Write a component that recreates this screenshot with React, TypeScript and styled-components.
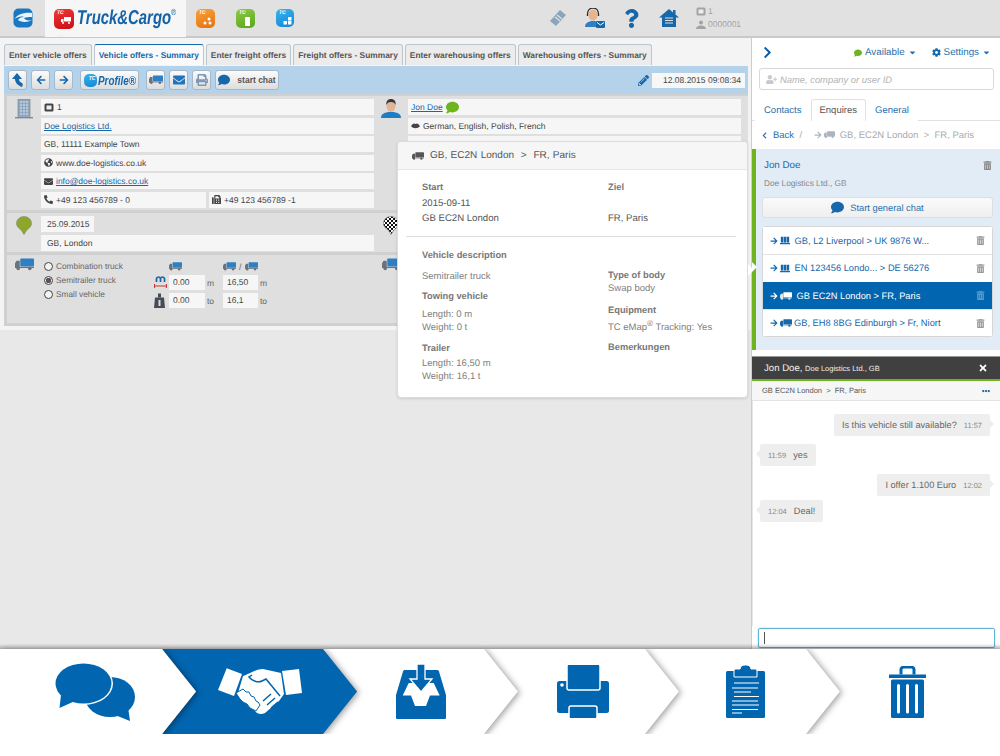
import styled, { createGlobalStyle } from 'styled-components';
import {
  FaArrowLeft,
  FaArrowRight,
  FaCaretDown,
  FaChevronLeft,
  FaChevronRight,
  FaCog,
  FaComment,
  FaEllipsisH,
  FaEnvelope,
  FaFax,
  FaGlobeAmericas,
  FaPencilAlt,
  FaPhoneAlt,
  FaPrint,
  FaQuestion,
  FaTimes,
  FaTrashAlt,
  FaUserPlus,
} from 'react-icons/fa';

const GlobalStyle = createGlobalStyle`
  html, body {
    margin: 0;
    padding: 0;
    background: #fff;
    font-family: "Liberation Sans", Arial, sans-serif;
    text-rendering: geometricPrecision;
  }
  * { box-sizing: border-box; }
`;

const Page = styled.div`
  width: 1000px;
  height: 756px;
  display: flex;
  flex-direction: column;
  overflow: hidden;
  background: #fff;
`;

/* top bar */
const TopBar = styled.header`
  height: 38px;
  flex: none;
  display: flex;
  align-items: center;
  background: #e1e1e1;
  border-bottom: 2px solid #c9c9c9;
`;

const LogoSlot = styled.div`
  width: 45px;
  height: 36px;
  display: flex;
  align-items: center;
  padding-left: 13px;
`;

const ActiveProduct = styled.div`
  position: relative;
  width: 141px;
  height: 37px;
  margin-bottom: -1px;
  display: flex;
  align-items: center;
  gap: 3px;
  padding-left: 9px;
  background: #f6f6f6;
  &::after {
    content: '';
    position: absolute;
    left: 11px;
    bottom: 0;
    border: 5px solid transparent;
    border-top: 0;
    border-bottom-color: #f3f3f3;
  }
`;

const Brand = styled.span`
  display: inline-block;
  width: 105px;
  font-size: 20px;
  font-weight: 700;
  font-style: italic;
  color: #1463a6;
  white-space: nowrap;
  transform: scaleX(0.745);
  transform-origin: left center;
  sup {
    font-size: 9px;
    font-weight: 400;
    vertical-align: 9px;
    line-height: 0;
  }
`;

const ProductTiles = styled.div`
  display: flex;
  align-items: center;
  gap: 21px;
  margin-left: 10px;
`;

const Tile = styled.div<{ $from: string; $to: string; $size?: number }>`
  width: ${(p) => p.$size ?? 19}px;
  height: ${(p) => p.$size ?? 19}px;
  flex: none;
  border-radius: 5px;
  padding: 1px 0 0 3px;
  background: linear-gradient(160deg, ${(p) => p.$from}, ${(p) => p.$to});
  color: #fff;
  font-size: 5px;
  font-weight: 700;
  font-style: italic;
  line-height: 7px;
  display: flex;
  flex-direction: column;
  svg { margin: 0 0 0 4px; }
`;

const TopIcons = styled.div`
  margin-left: auto;
  display: flex;
  align-items: center;
  height: 36px;
  padding-right: 258px;
`;

const TopIconSlot = styled.div<{ $width: number }>`
  width: ${(p) => p.$width}px;
  display: flex;
  justify-content: center;
  color: #1767ab;
`;

const AccountInfo = styled.div`
  width: 46px;
  margin-left: 9px;
  font-size: 8.5px;
  line-height: 13px;
  color: #a3a3a3;
  div { display: flex; align-items: center; gap: 2px; }
`;

/* main split */
const Workspace = styled.div`
  height: 611px;
  flex: none;
  display: flex;
`;

const LeftPane = styled.main`
  position: relative;
  width: 752px;
  flex: none;
  background: #e8e8e8;
  border-right: 1px solid #cdcdcd;
`;

const OfferPanel = styled.section`
  height: 292px;
  padding: 6px 3px 4px 4px;
  background: #f4f4f4;
`;

const TabRow = styled.nav`
  display: flex;
  gap: 2px;
  height: 22px;
`;

const OfferTab = styled.div<{ $active?: boolean }>`
  padding: 0 4px;
  height: 21px;
  display: flex;
  align-items: center;
  font-size: 8.4px;
  font-weight: 700;
  white-space: nowrap;
  border-radius: 3px 3px 0 0;
  border: 1px solid #bcc6ce;
  border-bottom: 0;
  border-top: ${(p) => (p.$active ? '1px solid #1767ab' : '1px solid #bcc6ce')};
  color: ${(p) => (p.$active ? '#1767ab' : '#555')};
  background: ${(p) => (p.$active ? '#fafafa' : '#ececec')};
`;

const Toolbar = styled.div`
  height: 28px;
  display: flex;
  align-items: center;
  padding-left: 4px;
  gap: 4px;
  background: #b4d2e9;
`;

const ToolButton = styled.button<{ $gapLeft?: number }>`
  height: 20px;
  width: 19px;
  padding: 0;
  margin-left: ${(p) => p.$gapLeft ?? 0}px;
  display: flex;
  align-items: center;
  justify-content: center;
  gap: 6px;
  font-family: inherit;
  font-size: 8.5px;
  font-weight: 700;
  color: #555;
  border: 1px solid #a5b9ca;
  border-radius: 3px;
  background: linear-gradient(#fbfbfb, #dddddd);
  svg { flex: none; }
`;

const ChatToolButton = styled(ToolButton)`
  width: 64px;
  gap: 7px;
`;

const ProfileButton = styled(ToolButton)`
  width: 59px;
  gap: 1px;
  justify-content: flex-start;
  padding-left: 3px;
`;

const ProfileLabel = styled.span`
  display: inline-block;
  width: 39px;
  font-size: 13px;
  font-style: italic;
  font-weight: 700;
  color: #1767ab;
  white-space: nowrap;
  text-align: left;
  transform: scaleX(0.76);
  transform-origin: left center;
`;

const Stamp = styled.div`
  margin-left: auto;
  margin-right: 3px;
  display: flex;
  align-items: center;
  gap: 3px;
  color: #1767ab;
`;

const StampValue = styled.span`
  width: 93px;
  height: 15px;
  padding-right: 4px;
  background: #f7f7f7;
  color: #444;
  font-size: 8.5px;
  line-height: 15px;
  text-align: right;
`;

const Sections = styled.div`
  padding: 2px 0 0 3px;
  background: #d0d0d0;
  height: 232px;
  display: flex;
  flex-direction: column;
  gap: 3px;
`;

const Section = styled.div<{ $height: number }>`
  height: ${(p) => p.$height}px;
  width: 741px;
  display: flex;
  padding-top: 3px;
  background: #dfdfdf;
`;

const Half = styled.div`
  width: 367px;
  display: flex;
  flex: none;
`;

const IconCol = styled.div`
  width: 34px;
  flex: none;
  display: flex;
  justify-content: center;
`;

const RowStack = styled.div`
  flex: 1;
  display: flex;
  flex-direction: column;
  gap: 2.6px;
`;

const Row = styled.div<{ $inset?: boolean; $width?: number }>`
  height: 16px;
  width: ${(p) => (p.$width ? `${p.$width}px` : 'auto')};
  padding-left: ${(p) => (p.$inset ? 6 : 3)}px;
  display: flex;
  align-items: center;
  gap: 3px;
  background: #f6f6f6;
  font-size: 8.5px;
  color: #444;
  white-space: nowrap;
  svg { flex: none; }
`;

const SplitRow = styled.div`
  display: grid;
  grid-template-columns: 1fr 1fr;
  gap: 3px;
`;

const TextLink = styled.span`
  color: #1767ab;
  text-decoration: underline;
`;

const RadioList = styled.div`
  width: 113px;
  flex: none;
  padding: 3px 0 0 3px;
  display: flex;
  flex-direction: column;
  gap: 4px;
`;

const RadioLine = styled.label`
  display: flex;
  align-items: center;
  gap: 3px;
  height: 10px;
  font-size: 8.3px;
  color: #666;
  white-space: nowrap;
`;

const RadioDot = styled.span<{ $on?: boolean }>`
  width: 9px;
  height: 9px;
  flex: none;
  border-radius: 50%;
  border: 1px solid #444;
  background: ${(p) => (p.$on ? 'radial-gradient(circle, #555 0 2.5px, #eee 3px)' : '#f3f3f3')};
`;

const MeasureGrid = styled.div`
  display: grid;
  grid-template-columns: 15px 36px 18px 35px 14px;
  grid-template-rows: 11px 15px 15px;
  row-gap: 3px;
  padding-top: 3px;
  align-items: center;
  font-size: 8.5px;
  color: #666;
`;

const MeasureHead = styled.div`
  display: flex;
  align-items: center;
  gap: 3px;
  height: 11px;
  font-size: 9px;
`;

const MeasureValue = styled.div`
  height: 15px;
  padding-left: 4px;
  background: #f6f6f6;
  color: #444;
  line-height: 15px;
`;

const MeasureUnit = styled.span`
  padding-left: 2px;
`;

/* popover */
const Popover = styled.aside`
  position: absolute;
  left: 397px;
  top: 103px;
  width: 351px;
  height: 257px;
  background: #fff;
  border: 1px solid #dcdcdc;
  border-radius: 4px;
  box-shadow: 0 1px 3px rgba(0, 0, 0, 0.12);
  &::after {
    content: '';
    position: absolute;
    right: -7px;
    top: 122px;
    border: 6px solid transparent;
    border-right: 0;
    border-left: 6px solid #fff;
  }
`;

const PopHeader = styled.div`
  height: 28px;
  padding-left: 14px;
  display: flex;
  align-items: center;
  gap: 6px;
  background: #f6f6f6;
  border-bottom: 1px solid #e6e6e6;
  border-radius: 4px 4px 0 0;
  font-size: 10px;
  color: #555;
  word-spacing: 0.6px;
`;

const PopRoute = styled.div`
  display: grid;
  grid-template-columns: 186px 1fr;
  padding: 10px 0 0 24px;
  font-size: 9.6px;
  line-height: 15.5px;
  color: #666;
`;

const PopDetails = styled.div`
  display: grid;
  grid-template-columns: 186px 1fr;
  padding-left: 24px;
  font-size: 9.5px;
  line-height: 13px;
  color: #666;
`;

const PopTitle = styled.div<{ $top?: number }>`
  font-weight: 700;
  font-size: 9.3px;
  color: #777;
  margin-top: ${(p) => p.$top ?? 0}px;
`;

const PopDivider = styled.hr`
  margin: 9px 11px 12px 8px;
  border: 0;
  border-top: 1px solid #ddd;
`;

const PopLine = styled.div<{ $top?: number }>`
  color: #808080;
  margin-top: ${(p) => p.$top ?? 0}px;
  sup { font-size: 8px; line-height: 0; }
`;

const PopStart = styled.div`
  color: #555;
`;

/* right panel */
const RightPane = styled.aside`
  width: 248px;
  flex: none;
  display: flex;
  flex-direction: column;
  background: #fff;
`;

const PaneHeader = styled.div`
  height: 29px;
  flex: none;
  display: flex;
  align-items: center;
  padding: 0 9px 0 11px;
  font-size: 9.8px;
  color: #2a70ab;
`;

const PaneControl = styled.span<{ $left?: number }>`
  display: flex;
  align-items: center;
  gap: 3px;
  margin-left: ${(p) => p.$left ?? 0}px;
`;

const SearchBox = styled.div`
  height: 22px;
  flex: none;
  margin: 1px 6px 0 7px;
  padding-left: 6px;
  display: flex;
  align-items: center;
  gap: 3px;
  border: 1px solid #d8d8d8;
  border-radius: 3px;
  font-size: 9.4px;
  font-style: italic;
  color: #b3b3b3;
`;

const PaneTabs = styled.div`
  height: 22px;
  flex: none;
  margin-top: 9px;
  padding-left: 3px;
  display: flex;
  border-bottom: 1px solid #e1e1e1;
`;

const PaneTab = styled.div<{ $active?: boolean }>`
  height: 22px;
  padding: 0 8px;
  line-height: 21px;
  font-size: 9.5px;
  color: ${(p) => (p.$active ? '#555' : '#2a70ab')};
  background: #fff;
  border: 1px solid ${(p) => (p.$active ? '#e1e1e1' : 'transparent')};
  border-bottom: 0;
  border-radius: 3px 3px 0 0;
`;

const BackRow = styled.div`
  height: 28px;
  flex: none;
  padding-left: 9px;
  display: flex;
  align-items: center;
  font-size: 9.5px;
  color: #aaa;
`;

const BackLink = styled.span`
  display: flex;
  align-items: center;
  gap: 5px;
  color: #2a70ab;
`;

const BackRoute = styled.span`
  display: flex;
  align-items: center;
  gap: 2px;
  margin-left: 12px;
`;

const EnquiryPanel = styled.div`
  position: relative;
  height: 201px;
  flex: none;
  padding: 9px 7px 0 6px;
  background: #e2ecf6;
  border-left: 4px solid #6db41e;
  &::before {
    content: '';
    position: absolute;
    left: -4px;
    top: 113px;
    border: 5px solid transparent;
    border-right: 0;
    border-left: 5px solid #fff;
  }
`;

const ContactName = styled.div`
  display: flex;
  align-items: center;
  justify-content: space-between;
  height: 15px;
  padding: 0 1px 0 2px;
  font-size: 9.8px;
  color: #1767ab;
  svg { color: #888; }
`;

const ContactFirm = styled.div`
  height: 15px;
  padding-left: 2px;
  margin-top: 3px;
  font-size: 8.3px;
  line-height: 15px;
  color: #888;
`;

const ChatButton = styled.div`
  height: 21px;
  margin-top: 6px;
  display: flex;
  align-items: center;
  justify-content: center;
  gap: 6px;
  background: linear-gradient(#fafafa, #efefef);
  border: 1px solid #dedede;
  border-radius: 3px;
  font-size: 9.3px;
  color: #2a70ab;
`;

const RouteList = styled.ul`
  list-style: none;
  margin: 8px 0 0;
  padding: 0;
  border: 1px solid #d6d6d6;
  border-radius: 3px;
  background: #fff;
`;

const RouteItem = styled.li<{ $selected?: boolean }>`
  height: 27.3px;
  padding: 0 7px 0 7px;
  display: flex;
  align-items: center;
  gap: 2px;
  font-size: 9.3px;
  white-space: nowrap;
  color: ${(p) => (p.$selected ? '#fff' : '#1767ab')};
  background: ${(p) => (p.$selected ? '#0265b0' : '#fff')};
  border-top: 1px solid ${(p) => (p.$selected ? '#0265b0' : '#e3e3e3')};
  &:first-child { border-top: 0; }
  svg.bin {
    margin-left: auto;
    color: ${(p) => (p.$selected ? '#5f9bcb' : '#999')};
  }
`;

const ChatHead = styled.div`
  height: 25px;
  flex: none;
  margin-top: 6px;
  padding: 0 12px;
  display: flex;
  align-items: center;
  justify-content: space-between;
  background: #404040;
  border-top: 1px solid #999;
  border-bottom: 2px solid #6db41e;
  font-size: 9.6px;
  color: #f0f0f0;
  small { font-size: 7.5px; }
  svg { color: #fff; }
`;

const ChatSubject = styled.div`
  height: 20px;
  flex: none;
  padding: 0 10px 0 10px;
  display: flex;
  align-items: center;
  justify-content: space-between;
  background: #f6f6f6;
  border-bottom: 1px solid #e3e3e3;
  font-size: 7.5px;
  color: #555;
  svg { color: #1767ab; }
`;

const ChatLog = styled.div`
  flex: 1;
  min-height: 0;
  padding: 13px 10px 0 7px;
  display: flex;
  flex-direction: column;
  gap: 8px;
  border-left: 1px solid #e6e6e6;
`;

const Bubble = styled.div<{ $own?: boolean; $pull?: boolean }>`
  position: relative;
  align-self: ${(p) => (p.$own ? 'flex-end' : 'flex-start')};
  height: 22px;
  margin-top: ${(p) => (p.$pull ? -4 : 0)}px;
  padding: 0 8px;
  display: flex;
  align-items: center;
  gap: 7px;
  background: #eeeeee;
  border-radius: 2px;
  font-size: 9.2px;
  color: #666;
  &::after {
    content: '';
    position: absolute;
    top: 6px;
    ${(p) => (p.$own ? 'right: -4px;' : 'left: -4px;')}
    border: 4px solid transparent;
    ${(p) => (p.$own ? 'border-right: 0; border-left-color: #eee;' : 'border-left: 0; border-right-color: #eee;')}
  }
`;

const BubbleTime = styled.span`
  font-size: 7.5px;
  color: #888;
`;

const ChatInputBar = styled.div`
  height: 23px;
  flex: none;
  padding: 2px 5px 1px 6px;
`;

const ChatInput = styled.div`
  height: 20px;
  border: 1px solid #62b3d8;
  border-radius: 2px;
  box-shadow: 0 0 2px rgba(98, 179, 216, 0.6);
  padding: 3px 0 0 5px;
  &::before {
    content: '';
    display: block;
    width: 1px;
    height: 12px;
    background: #555;
  }
`;

/* bottom chevrons */
const ActionBar = styled.nav`
  position: relative;
  height: 85px;
  flex: none;
  display: flex;
  background: #fff;
  clip-path: inset(-6px 0 0 0);
  &::before {
    content: '';
    position: absolute;
    left: 0;
    right: 0;
    top: -5px;
    height: 5px;
    background: linear-gradient(rgba(0, 0, 0, 0), rgba(0, 0, 0, 0.22));
    z-index: 20;
  }
`;

const ActionCell = styled.div<{ $order: number; $first?: boolean }>`
  z-index: ${(p) => 10 - p.$order};
  margin-left: ${(p) => (p.$first ? 0 : -34)}px;
  filter: drop-shadow(2px 1px 3px rgba(0, 0, 0, 0.38));
`;

const ActionShape = styled.div<{ $w: number; $active?: boolean; $first?: boolean; $last?: boolean; $shift?: number }>`
  width: ${(p) => p.$w}px;
  height: 85px;
  display: flex;
  align-items: center;
  justify-content: center;
  padding-left: ${(p) => (p.$first ? 0 : 34)}px;
  padding-right: ${(p) => (p.$first ? 6 : p.$last ? 26 : 34)}px;
  background: ${(p) => (p.$active ? '#0265b0' : '#fff')};
  clip-path: ${(p) =>
    p.$first
      ? 'polygon(0 0, 162px 0, 100% 50%, 162px 100%, 0 100%)'
      : p.$last
        ? 'polygon(0 0, 100% 0, 100% 100%, 0 100%, 34px 50%)'
        : 'polygon(0 0, calc(100% - 34px) 0, 100% 50%, calc(100% - 34px) 100%, 0 100%, 34px 50%)'};
  svg { display: block; margin-left: ${(p) => p.$shift ?? 0}px; }
`;

/* drawings */
function TruckGlyph({ box = '#2f7fc4', cab = '#68737d', w = 18 }: { box?: string; cab?: string; w?: number }) {
  return (
    <svg width={w} height={(w * 12) / 18} viewBox="0 0 18 12">
      <rect x="5" y="0.5" width="13" height="7.5" rx="0.7" fill={box} />
      <path d="M0 9.5V5l1.5-2.5H4.5v7z" fill={cab} />
      <rect x="0" y="8.4" width="18" height="1.1" fill={cab} />
      <circle cx="3" cy="10" r="1.7" fill={cab} />
      <circle cx="14" cy="10" r="1.7" fill={cab} />
    </svg>
  );
}

function Flag({ color = '#1767ab' }: { color?: string }) {
  return <FaArrowRight size={8} color={color} />;
}

function Goods({ color = '#1767ab' }: { color?: string }) {
  return (
    <svg width="10" height="9" viewBox="0 0 12 10" fill={color}>
      <rect x="1" y="0.5" width="3" height="7" />
      <rect x="4.5" y="0.5" width="3" height="7" />
      <rect x="8" y="0.5" width="3" height="7" />
      <rect x="0" y="8" width="12" height="1.5" />
    </svg>
  );
}

function IdBadge({ color = '#444' }: { color?: string }) {
  return (
    <svg width="10" height="9" viewBox="0 0 10 9">
      <rect x="0.5" y="0.5" width="9" height="8" rx="1.5" fill={color} />
      <rect x="2.5" y="2.5" width="5" height="4" fill="#eee" />
    </svg>
  );
}

function AppLogo() {
  return (
    <svg width="20" height="20" viewBox="0 0 20 20">
      <rect x="0.5" y="0.5" width="19" height="19" rx="5" fill="#1a78c2" />
      <path d="M19 5C11 4 3 7 2 11c2-2 6-3 9-2-3 0-5 1-6 3 2 2 9 3 14 0-4 1-7 0-8-2 2-1 5-1 8-1z" fill="#e9f4fb" />
    </svg>
  );
}

function Building() {
  return (
    <svg width="18" height="20" viewBox="0 0 18 20">
      <rect x="3" y="0.5" width="12" height="18" fill="#8fa8c0" stroke="#7a7a7a" strokeWidth="0.6" />
      <path d="M5 3h8M5 6h8M5 9h8M5 12h8M5 15h8" stroke="#dbe6ef" strokeWidth="1.2" />
      <path d="M7.5 2v15M10.5 2v15" stroke="#8fa8c0" strokeWidth="1" />
      <rect x="0" y="18" width="18" height="1.4" fill="#888" />
    </svg>
  );
}

function Person() {
  return (
    <svg width="20" height="19" viewBox="0 0 20 19">
      <path d="M0 19c0-4 3-5 7-6h6c4 1 7 2 7 6z" fill="#1f7dc4" />
      <ellipse cx="10" cy="7" rx="4.5" ry="6" fill="#e2b597" />
      <path d="M5.3 6C5 2 7 0 10 0s5 2 4.7 6c-1-2-2-3-4.7-3S6.300 4 5.300 6z" fill="#33383d" />
    </svg>
  );
}

function Pin({ checker }: { checker?: boolean }) {
  return (
    <svg width="16" height="19" viewBox="0 0 16 19">
      <defs>
        <pattern id="chk" width="4" height="4" patternUnits="userSpaceOnUse">
          <rect width="4" height="4" fill="#fff" />
          <rect width="2" height="2" fill="#111" />
          <rect x="2" y="2" width="2" height="2" fill="#111" />
        </pattern>
      </defs>
      <path
        d="M8 0.500C3.800 0.500 0.500 3.500 0.500 7.500c0 3.500 3 5 5 7l2.500 4 2.500-4c2-2 5-3.500 5-7C15.500 3.500 12.200 0.500 8 0.500z"
        fill={checker ? 'url(#chk)' : '#8fa62c'}
        stroke={checker ? '#777' : '#89907a'}
        strokeWidth="0.7"
      />
    </svg>
  );
}

function LengthMark() {
  return (
    <svg width="13" height="15" viewBox="0 0 13 15">
      <path d="M2.500 7V3.500C3.500 1.500 5.500 1.500 6.500 3.500V7M6.500 3.500C7.500 1.500 9.500 1.500 10.500 3.500V7" fill="none" stroke="#1767ab" strokeWidth="1.700" />
      <path d="M0 11h13M0.500 9v4M12.500 9v4" stroke="#c63a33" strokeWidth="1.2" />
    </svg>
  );
}

function WeightMark() {
  return (
    <svg width="11" height="15" viewBox="0 0 11 15">
      <path d="M1 4.500H10L11 15H0z" fill="#454c54" />
      <rect x="4" y="0.500" width="3" height="4" fill="#454c54" />
      <rect x="4.500" y="7" width="2" height="6" fill="#ddd" />
    </svg>
  );
}

function TicketIcon() {
  return (
    <svg width="18" height="18" viewBox="0 0 18 18">
      <path d="M1 12L11 1l6 5L7 17z" fill="#8ca4b8" />
      <path d="M6 8l5 4" stroke="#e1e1e1" strokeWidth="1.200" />
      <path d="M8 6l5 4" stroke="#e1e1e1" strokeWidth="1.200" />
    </svg>
  );
}

function AgentIcon() {
  return (
    <svg width="20" height="20" viewBox="0 0 20 20">
      <path d="M0 19c0-4 3-5 6-6h4l4 2v4z" fill="#2f7fc4" />
      <ellipse cx="8" cy="7" rx="4.500" ry="5.500" fill="#e7b48d" />
      <path d="M2.500 8V6c0-8 11-8 11 0v2" fill="none" stroke="#2b2b2b" strokeWidth="1.300" />
      <rect x="11" y="13" width="9" height="7" rx="1" fill="#1767ab" />
      <path d="M12 14.500l3.500 2.500 3.500-2.500" fill="none" stroke="#fff" strokeWidth="1" />
    </svg>
  );
}

function HomeIcon() {
  return (
    <svg width="20" height="20" viewBox="0 0 20 20">
      <path d="M10 1L0 9.500h3V19h14V9.500h3L16.500 6.500V2h-2.500v2.500z" fill="#1767ab" />
      <path d="M6 10h8M6 12.500h8M6 15h8" stroke="#e1e1e1" strokeWidth="1.200" />
    </svg>
  );
}

function SpeechPair() {
  return (
    <svg width="80" height="58" viewBox="0 0 80 58">
      <ellipse cx="55" cy="34" rx="25" ry="20" fill="#0265b0" />
      <path d="M60 52l15 6-2-14z" fill="#0265b0" />
      <ellipse cx="28.500" cy="20.500" rx="29.500" ry="21.500" fill="#fff" />
      <ellipse cx="28.500" cy="20.500" rx="28" ry="20" fill="#0265b0" />
      <path d="M6 32L4.500 45 20 38z" fill="#0265b0" />
    </svg>
  );
}

function Handshake() {
  return (
    <svg width="84" height="48" viewBox="0 0 84 48">
      <path d="M8.700 0.300L24 6 16 28 0 22zM64 3L81 1 84 25 68 27z" fill="#fff" />
      <path d="M25 8C31 6 38 1 45 1L63 5 66 26 61 33 47 45C43 47 39 46 37 43L31 37 29 33 20 25z" fill="#fff" />
      <path d="M18 25L25 21 28 24 31 24 33 28 36 29 38 33 40 34 42 37 38 43 32 40 29 36 25 34 22 31z" fill="#fff" stroke="#0265b0" strokeWidth="1" />
      <path
        d="M34 7L31 9C34 13 40 15 44 13L48 11 62 28M53 26L45 33M57 30L49 37M60 34L53 40"
        fill="none"
        stroke="#0265b0"
        strokeWidth="1.500"
      />
    </svg>
  );
}

function Inbox() {
  return (
    <svg width="50" height="55" viewBox="0 0 50 55">
      <path d="M0 31L7 7.500C7.300 6.500 8 6 9 6H41C42 6 42.700 6.500 43 7.500L50 31V53.500C50 54.500 49.500 55 48.500 55H1.500C0.500 55 0 54.500 0 53.500z" fill="#0265b0" />
      <path d="M6.700 31.600L12.700 19H37.700L43.700 31.600H34L30 42H19L15 31.600z" fill="#fff" />
      <path d="M21 0H29V15H36L25 28 14 15H21z" fill="#0265b0" stroke="#fff" strokeWidth="1.300" />
    </svg>
  );
}

function Printer() {
  return (
    <svg width="52" height="53" viewBox="0 0 52 53">
      <rect x="0" y="16" width="52" height="32" rx="2.500" fill="#0265b0" />
      <rect x="10" y="-1" width="33" height="26" rx="2" fill="#0265b0" stroke="#fff" strokeWidth="1.500" />
      <circle cx="5" cy="20" r="1.800" fill="#fff" />
      <rect x="12" y="41" width="28" height="13" rx="2" fill="#0265b0" stroke="#fff" strokeWidth="1.500" />
    </svg>
  );
}

function Clipboard() {
  return (
    <svg width="39" height="53" viewBox="0 0 39 53">
      <rect x="0" y="6" width="39" height="47" rx="1.500" fill="#0265b0" />
      <path d="M8 12V6C8 4.500 9 4 10.500 4H14C14.500 1 16 0 19.500 0S24.500 1 25 4H28.500C30 4 31 4.500 31 6V12z" fill="#0265b0" stroke="#fff" strokeWidth="1" />
      <path d="M8 18H33M6 23H32M8 27H25M8 31.500H33M6 36H32M6 40H33M6 44.500H32M6 48H16" stroke="#fff" strokeWidth="1.200" />
    </svg>
  );
}

function TrashBin() {
  return (
    <svg width="37" height="52" viewBox="0 0 37 52">
      <path d="M0 8.500H37V12H0z" fill="#0265b0" />
      <path d="M12 8.500V3.500C12 2 13.500 1 15 1H22C23.500 1 25 2 25 3.500V8.500" fill="none" stroke="#0265b0" strokeWidth="3" />
      <rect x="2" y="13.500" width="33" height="38.500" rx="1.500" fill="#0265b0" />
      <path d="M9.500 19.500V46M18.500 19.500V46M27.500 19.500V46" stroke="#fff" strokeWidth="3" strokeLinecap="round" />
    </svg>
  );
}

function App() {
  return (
    <Page>
      <GlobalStyle />
      <TopBar>
        <LogoSlot>
          <AppLogo />
        </LogoSlot>
        <ActiveProduct>
          <Tile $from="#ee3a3a" $to="#c90d14" $size={20}>
            TC
            <svg width="10" height="7" viewBox="0 0 10 7" fill="#fff">
              <rect x="3" y="0" width="7" height="4.500" />
              <rect x="0" y="2" width="2.500" height="3" />
              <circle cx="2" cy="6" r="1" />
              <circle cx="8" cy="6" r="1" />
            </svg>
          </Tile>
          <Brand>
            Truck&amp;Cargo<sup>®</sup>
          </Brand>
        </ActiveProduct>
        <ProductTiles>
          <Tile $from="#f9a23c" $to="#e6700f">
            TC
            <svg width="9" height="8" viewBox="0 0 9 8" fill="#fff">
              <circle cx="2" cy="6" r="1.500" />
              <circle cx="7" cy="6" r="1.500" />
              <circle cx="6" cy="2" r="1.500" />
            </svg>
          </Tile>
          <Tile $from="#90cb45" $to="#57a51d">
            TC
            <svg width="9" height="9" viewBox="0 0 9 9" fill="#fff">
              <rect x="2" y="0" width="5" height="9" rx="0.500" />
            </svg>
          </Tile>
          <Tile $from="#37b3ec" $to="#1287d6" $size={18}>
            TC
            <svg width="9" height="8" viewBox="0 0 9 8" fill="#fff">
              <rect x="5" y="0" width="3.500" height="3.500" />
              <rect x="0.500" y="4" width="3.500" height="3.500" />
              <rect x="5" y="4" width="3.500" height="3.500" />
            </svg>
          </Tile>
        </ProductTiles>
        <TopIcons>
          <TopIconSlot $width={37}>
            <TicketIcon />
          </TopIconSlot>
          <TopIconSlot $width={37}>
            <AgentIcon />
          </TopIconSlot>
          <TopIconSlot $width={37}>
            <FaQuestion size={19} />
          </TopIconSlot>
          <TopIconSlot $width={37}>
            <HomeIcon />
          </TopIconSlot>
          <AccountInfo>
            <div>
              <IdBadge color="#a3a3a3" /> 1
            </div>
            <div>
              <svg width="10" height="9" viewBox="0 0 10 9" fill="#a3a3a3">
                <circle cx="5" cy="2.500" r="2" />
                <path d="M0 9c0-2 2-3.500 5-3.500S10 7 10 9z" />
              </svg>
              0000001
            </div>
          </AccountInfo>
        </TopIcons>
      </TopBar>

      <Workspace>
        <LeftPane>
          <OfferPanel>
            <TabRow>
              <OfferTab>Enter vehicle offers</OfferTab>
              <OfferTab $active>Vehicle offers - Summary</OfferTab>
              <OfferTab>Enter freight offers</OfferTab>
              <OfferTab>Freight offers - Summary</OfferTab>
              <OfferTab>Enter warehousing offers</OfferTab>
              <OfferTab>Warehousing offers - Summary</OfferTab>
            </TabRow>
            <Toolbar>
              <ToolButton>
                <svg width="12" height="14" viewBox="0 0 12 14" fill="#1767ab">
                  <path d="M5 0L0 6h3c0 3 2 6 7 8 1-2 1-3 0-4C8 9 7 8 7 6h3z" />
                </svg>
              </ToolButton>
              <ToolButton>
                <FaArrowLeft size={10} color="#1767ab" />
              </ToolButton>
              <ToolButton>
                <FaArrowRight size={10} color="#1767ab" />
              </ToolButton>
              <ProfileButton $gapLeft={3}>
                <Tile $from="#37b3ec" $to="#1287d6" $size={13}>
                  TC
                </Tile>
                <ProfileLabel>Profile®</ProfileLabel>
              </ProfileButton>
              <ToolButton $gapLeft={3}>
                <TruckGlyph w={14} />
              </ToolButton>
              <ToolButton>
                <FaEnvelope size={12} color="#1f74bb" />
              </ToolButton>
              <ToolButton>
                <FaPrint size={12} color="#7d99b5" />
              </ToolButton>
              <ChatToolButton>
                <FaComment size={12} color="#1767ab" />
                start chat
              </ChatToolButton>
              <Stamp>
                <FaPencilAlt size={11} />
                <StampValue>12.08.2015 09:08:34</StampValue>
              </Stamp>
            </Toolbar>
            <Sections>
              <Section $height={114}>
                <Half>
                  <IconCol>
                    <Building />
                  </IconCol>
                  <RowStack>
                    <Row>
                      <IdBadge /> 1
                    </Row>
                    <Row>
                      <TextLink>Doe Logistics Ltd.</TextLink>
                    </Row>
                    <Row>GB, 11111 Example Town</Row>
                    <Row>
                      <FaGlobeAmericas size={9} color="#444" /> www.doe-logistics.co.uk
                    </Row>
                    <Row>
                      <FaEnvelope size={9} color="#444" /> <TextLink>info@doe-logistics.co.uk</TextLink>
                    </Row>
                    <SplitRow>
                      <Row>
                        <FaPhoneAlt size={9} color="#444" /> +49 123 456789 - 0
                      </Row>
                      <Row>
                        <FaFax size={9} color="#444" /> +49 123 456789 -1
                      </Row>
                    </SplitRow>
                  </RowStack>
                </Half>
                <Half>
                  <IconCol>
                    <Person />
                  </IconCol>
                  <RowStack>
                    <Row>
                      <TextLink>Jon Doe</TextLink>
                      <FaComment size={13} color="#6db41e" />
                    </Row>
                    <Row>
                      <svg width="9" height="6" viewBox="0 0 9 6" fill="#444">
                        <path d="M0 3C2 0 3.500 0 4.500 1 5.500 0 7 0 9 3 7 6 2 6 0 3z" />
                      </svg>
                      German, English, Polish, French
                    </Row>
                    <Row />
                  </RowStack>
                </Half>
              </Section>
              <Section $height={39}>
                <Half>
                  <IconCol>
                    <Pin />
                  </IconCol>
                  <RowStack>
                    <Row $inset $width={53}>
                      25.09.2015
                    </Row>
                    <Row $inset>GB, London</Row>
                  </RowStack>
                </Half>
                <Half>
                  <IconCol>
                    <Pin checker />
                  </IconCol>
                </Half>
              </Section>
              <Section $height={68}>
                <Half>
                  <IconCol>
                    <TruckGlyph w={19} />
                  </IconCol>
                  <RadioList>
                    <RadioLine>
                      <RadioDot />
                      Combination truck
                    </RadioLine>
                    <RadioLine>
                      <RadioDot $on />
                      Semitrailer truck
                    </RadioLine>
                    <RadioLine>
                      <RadioDot />
                      Small vehicle
                    </RadioLine>
                  </RadioList>
                  <MeasureGrid>
                    <span />
                    <MeasureHead>
                      <TruckGlyph w={13} />
                    </MeasureHead>
                    <span />
                    <MeasureHead>
                      <TruckGlyph w={13} /> / <TruckGlyph w={13} />
                    </MeasureHead>
                    <span />
                    <LengthMark />
                    <MeasureValue>0.00</MeasureValue>
                    <MeasureUnit>m</MeasureUnit>
                    <MeasureValue>16,50</MeasureValue>
                    <MeasureUnit>m</MeasureUnit>
                    <WeightMark />
                    <MeasureValue>0.00</MeasureValue>
                    <MeasureUnit>to</MeasureUnit>
                    <MeasureValue>16,1</MeasureValue>
                    <MeasureUnit>to</MeasureUnit>
                  </MeasureGrid>
                </Half>
                <Half>
                  <IconCol>
                    <TruckGlyph w={19} />
                  </IconCol>
                </Half>
              </Section>
            </Sections>
          </OfferPanel>

          <Popover>
            <PopHeader>
              <TruckGlyph w={12} box="#555" cab="#555" />
              GB, EC2N London &nbsp;&gt;&nbsp; FR, Paris
            </PopHeader>
            <PopRoute>
              <div>
                <PopTitle>Start</PopTitle>
                <PopStart>2015-09-11</PopStart>
                <PopStart>GB EC2N London</PopStart>
              </div>
              <div>
                <PopTitle>Ziel</PopTitle>
                <PopStart>&nbsp;</PopStart>
                <PopStart>FR, Paris</PopStart>
              </div>
            </PopRoute>
            <PopDivider />
            <PopDetails>
              <div>
                <PopTitle>Vehicle description</PopTitle>
                <PopLine $top={8}>Semitrailer truck</PopLine>
                <PopTitle $top={7}>Towing vehicle</PopTitle>
                <PopLine $top={5}>Length: 0 m</PopLine>
                <PopLine>Weight: 0 t</PopLine>
                <PopTitle $top={8}>Trailer</PopTitle>
                <PopLine $top={2}>Length: 16,50 m</PopLine>
                <PopLine>Weight: 16,1 t</PopLine>
              </div>
              <div>
                <PopTitle $top={20}>Type of body</PopTitle>
                <PopLine>Swap body</PopLine>
                <PopTitle $top={9}>Equipment</PopTitle>
                <PopLine $top={4}>
                  TC eMap<sup>®</sup> Tracking: Yes
                </PopLine>
                <PopTitle $top={7}>Bemerkungen</PopTitle>
              </div>
            </PopDetails>
          </Popover>
        </LeftPane>

        <RightPane>
          <PaneHeader>
            <FaChevronRight size={13} color="#0b5ea6" />
            <PaneControl $left={82}>
              <FaComment size={8} color="#6db41e" /> Available <FaCaretDown size={9} />
            </PaneControl>
            <PaneControl $left={15}>
              <FaCog size={9} color="#1767ab" /> Settings <FaCaretDown size={9} />
            </PaneControl>
          </PaneHeader>
          <SearchBox>
            <FaUserPlus size={11} color="#c9c9c9" />
            Name, company or user ID
          </SearchBox>
          <PaneTabs>
            <PaneTab>Contacts</PaneTab>
            <PaneTab $active>Enquires</PaneTab>
            <PaneTab>General</PaneTab>
          </PaneTabs>
          <BackRow>
            <BackLink>
              <FaChevronLeft size={7} /> Back
            </BackLink>
            &nbsp;&nbsp;/
            <BackRoute>
              <Flag color="#aab5c0" />
              <TruckGlyph w={11} box="#aab5c0" cab="#aab5c0" />
              &nbsp;GB, EC2N London &nbsp;&gt;&nbsp; FR, Paris
            </BackRoute>
          </BackRow>
          <EnquiryPanel>
            <ContactName>
              Jon Doe
              <FaTrashAlt size={9} />
            </ContactName>
            <ContactFirm>Doe Logistics Ltd., GB</ContactFirm>
            <ChatButton>
              <FaComment size={13} color="#1767ab" />
              Start general chat
            </ChatButton>
            <RouteList>
              <RouteItem>
                <Flag />
                <Goods />
                &nbsp;GB, L2 Liverpool &gt; UK 9876 W...
                <FaTrashAlt className="bin" size={9} />
              </RouteItem>
              <RouteItem>
                <Flag />
                <Goods />
                &nbsp;EN 123456 Londo... &gt; DE 56276
                <FaTrashAlt className="bin" size={9} />
              </RouteItem>
              <RouteItem $selected>
                <Flag color="#fff" />
                <TruckGlyph w={12} box="#fff" cab="#d8e6f2" />
                &nbsp;GB EC2N London &gt; FR, Paris
                <FaTrashAlt className="bin" size={9} />
              </RouteItem>
              <RouteItem>
                <Flag />
                <TruckGlyph w={12} box="#1767ab" cab="#1767ab" />
                GB, EH8 8BG Edinburgh &gt; Fr, Niort
                <FaTrashAlt className="bin" size={9} />
              </RouteItem>
            </RouteList>
          </EnquiryPanel>
          <ChatHead>
            <span>
              Jon Doe, <small>Doe Logistics Ltd., GB</small>
            </span>
            <FaTimes size={10} />
          </ChatHead>
          <ChatSubject>
            GB EC2N London &nbsp;&gt;&nbsp; FR, Paris
            <FaEllipsisH size={8} />
          </ChatSubject>
          <ChatLog>
            <Bubble $own>
              Is this vehicle still available? <BubbleTime>11:57</BubbleTime>
            </Bubble>
            <Bubble>
              <BubbleTime>11:59</BubbleTime> yes
            </Bubble>
            <Bubble $own>
              I offer 1.100 Euro <BubbleTime>12:02</BubbleTime>
            </Bubble>
            <Bubble $pull>
              <BubbleTime>12:04</BubbleTime> Deal!
            </Bubble>
          </ChatLog>
          <ChatInputBar>
            <ChatInput />
          </ChatInputBar>
        </RightPane>
      </Workspace>

      <ActionBar>
        <ActionCell $order={0} $first>
          <ActionShape $w={196} $first>
            <SpeechPair />
          </ActionShape>
        </ActionCell>
        <ActionCell $order={1}>
          <ActionShape $w={195} $active>
            <Handshake />
          </ActionShape>
        </ActionCell>
        <ActionCell $order={2}>
          <ActionShape $w={195}>
            <Inbox />
          </ActionShape>
        </ActionCell>
        <ActionCell $order={3}>
          <ActionShape $w={195} $shift={3}>
            <Printer />
          </ActionShape>
        </ActionCell>
        <ActionCell $order={4}>
          <ActionShape $w={195} $shift={5}>
            <Clipboard />
          </ActionShape>
        </ActionCell>
        <ActionCell $order={5}>
          <ActionShape $w={194} $last>
            <TrashBin />
          </ActionShape>
        </ActionCell>
      </ActionBar>
    </Page>
  );
}

export default App;
